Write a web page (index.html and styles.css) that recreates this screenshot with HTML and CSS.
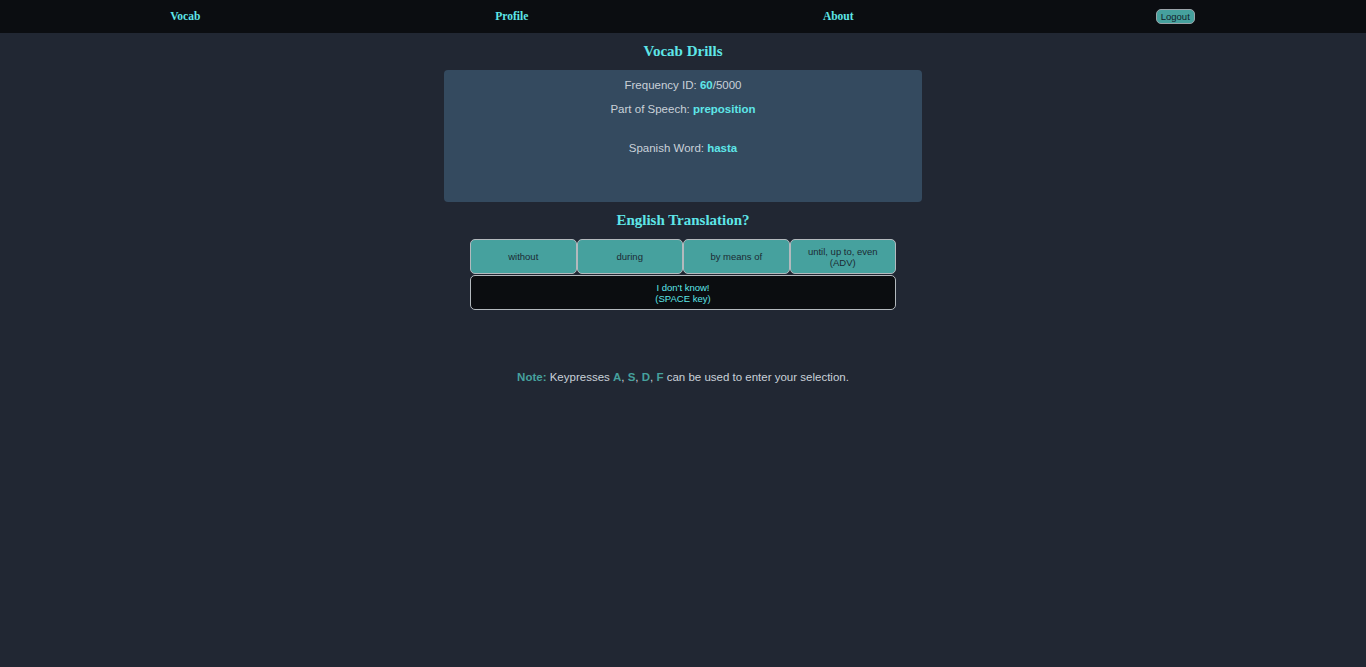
FILE: index.html
```html
<!DOCTYPE html>
<html>
<head>
<meta charset="utf-8">
<link rel="stylesheet" href="styles.css">
</head>
<body>
<nav class="nav">
  <a class="nav-link">Vocab</a>
  <a class="nav-link">Profile</a>
  <a class="nav-link">About</a>
  <div class="nav-end"><button class="logout">Logout</button></div>
</nav>
<main class="main">
  <h1 class="title">Vocab Drills</h1>
  <section class="card">
    <p class="line">Frequency ID: <b class="hl">60</b>/5000</p>
    <p class="line">Part of Speech: <b class="hl">preposition</b></p>
    <p class="line spanish">Spanish Word: <b class="hl">hasta</b></p>
  </section>
  <h2 class="title sub">English Translation?</h2>
  <div class="choices">
    <button class="choice">without</button>
    <button class="choice">during</button>
    <button class="choice">by means of</button>
    <button class="choice">until, up to, even<br>(ADV)</button>
    <button class="skip">I don't know!<br>(SPACE key)</button>
  </div>
  <p class="note"><b class="key">Note:</b> Keypresses <b class="key">A</b>, <b class="key">S</b>, <b class="key">D</b>, <b class="key">F</b> can be used to enter your selection.</p>
</main>
</body>
</html>
```
FILE: styles.css
```css
html, body {
  margin: 0;
  padding: 0;
  background: #212733;
  height: 100%;
}
body {
  font-family: "Liberation Sans", Arial, sans-serif;
}
.nav {
  height: 33px;
  background: #0b0d11;
  display: grid;
  grid-template-columns: 22px repeat(4, 326.5px) 1fr;
  align-items: center;
}
.nav-link {
  font-family: "Liberation Serif", "Times New Roman", serif;
  font-weight: bold;
  font-size: 11.5px;
  color: #5ee6e8;
  justify-self: center;
  line-height: 31px;
}
.nav-link:first-child { grid-column: 2; }
.nav-end {
  justify-self: center;
  padding-left: 21px;
  display: flex;
}
.logout {
  font-family: "Liberation Sans", Arial, sans-serif;
  font-size: 9.5px;
  color: #12222a;
  background: #46a19e;
  border: 1px solid #9aa3a8;
  border-radius: 5px;
  padding: 1px 4px;
  height: 15px;
  line-height: 11px;
}
.main {
  display: flex;
  flex-direction: column;
  align-items: center;
}
.title {
  font-family: "Liberation Serif", "Times New Roman", serif;
  font-weight: bold;
  font-size: 15px;
  color: #5ee6e8;
  margin: 8px 0 9px;
  line-height: 20px;
}
.card {
  width: 478px;
  height: 132px;
  background: #344a5f;
  border-radius: 4px;
  box-sizing: border-box;
  padding-top: 8px;
  display: flex;
  flex-direction: column;
  align-items: center;
}
.line {
  margin: 0;
  font-size: 11.5px;
  line-height: 14px;
  color: #c9d1d9;
}
.line + .line { margin-top: 10px; }
.line.spanish { margin-top: 25px; }
.hl { color: #5ee6e8; }
.sub { margin-top: 8px; margin-bottom: 9px; }
.choices {
  width: 426px;
  display: grid;
  grid-template-columns: repeat(4, 1fr);
  gap: 1px 0;
}
.choice, .skip {
  font-family: "Liberation Sans", Arial, sans-serif;
  font-size: 9.5px;
  line-height: 11px;
  height: 35px;
  border: 1px solid #b3b9bd;
  border-radius: 5px;
  padding: 0 2px;
}
.choice {
  background: #46a19e;
  color: #1c2a33;
}
.skip {
  grid-column: 1 / -1;
  background: #0b0d10;
  color: #5ee6e8;
}
.note {
  margin: 61px 0 0;
  font-size: 11.5px;
  line-height: 13px;
  color: #c9d1d9;
}
.key { color: #46a19e; }
```
